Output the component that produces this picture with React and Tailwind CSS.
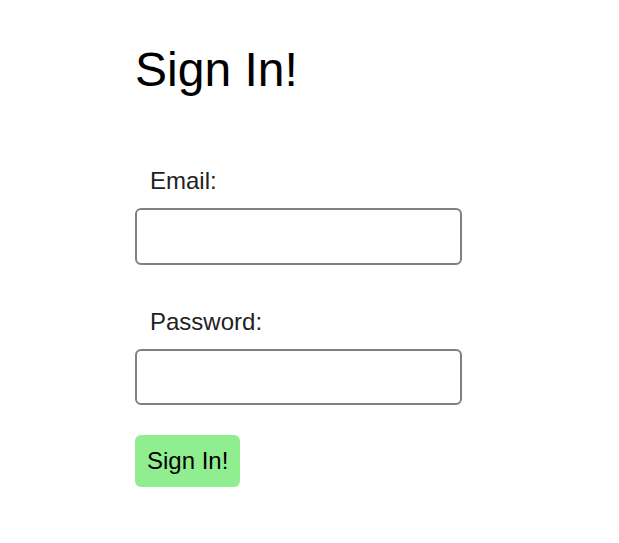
export default function App() {
  return (
    <div className="min-h-screen bg-white pl-[135px] pt-[42px] font-['Liberation_Sans',Arial,sans-serif]">
      <h1 className="text-[48px] leading-[55px] text-black">Sign In!</h1>

      <form className="mt-[70px] flex w-[327px] flex-col" onSubmit={(e) => e.preventDefault()}>
        <label htmlFor="email" className="pl-[15px] text-[24px] leading-[28px] text-[#222]">
          Email:
        </label>
        <input
          id="email"
          type="email"
          className="mt-[13px] h-[57px] w-full rounded-[6px] border-2 border-[#808080] bg-white px-2 text-[20px] outline-none"
        />

        <label htmlFor="password" className="mt-[43px] pl-[15px] text-[24px] leading-[28px] text-[#222]">
          Password:
        </label>
        <input
          id="password"
          type="password"
          className="mt-[13px] h-[56px] w-full rounded-[6px] border-2 border-[#808080] bg-white px-2 text-[20px] outline-none"
        />

        <div className="mt-[30px]">
          <button
            type="submit"
            className="h-[52px] rounded-[6px] bg-[#90ee90] px-3 text-[24px] leading-[28px] text-black"
          >
            Sign In!
          </button>
        </div>
      </form>
    </div>
  );
}
